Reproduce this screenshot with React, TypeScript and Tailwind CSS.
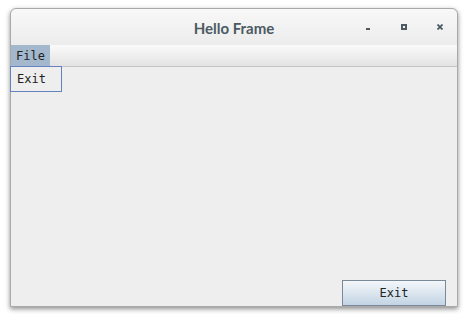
import React from 'react';

const mono = { fontFamily: '"DejaVu Sans Mono", monospace' };

const App: React.FC = () => {
  return (
    <div className="w-[468px] h-[317px] bg-white pt-[8px] pl-[10px]">
      <div className="relative w-[448px] h-[299px] flex flex-col rounded-t-[6px] border border-[#a9a9a9] bg-[#eeeeee] shadow-[0_2px_5px_rgba(0,0,0,0.45)]">
        {/* title bar */}
        <div className="h-[36px] flex items-center pt-[2px] rounded-t-[6px] bg-gradient-to-b from-[#f8f8f8] to-[#ececec]">
          <span
            className="flex-1 text-center text-[15px] font-bold text-[#4b5a63]"
            style={{ fontFamily: 'Lato, "Noto Sans", sans-serif' }}
          >
            Hello Frame
          </span>
          <div className="absolute right-[14px] top-[15px] h-[6px] flex">
            <div className="self-end w-[4px] h-[2px] bg-[#4b5a63] mr-[31px]" />
            <div className="w-[6px] h-[6px] border-[2px] border-[#4b5a63] mr-[30px]" />
            <svg width="6" height="6" viewBox="0 0 6 6">
              <path d="M0.5 0.5L5.5 5.5M5.5 0.5L0.5 5.5" stroke="#4b5a63" strokeWidth="1.8" />
            </svg>
          </div>
        </div>
        {/* menu bar */}
        <div className="h-[22px] flex bg-gradient-to-b from-[#fafafa] to-[#e3e3e3] border-b border-[#c4c4c4]">
          <div
            className="h-[21px] w-[39px] flex items-center justify-center bg-[#a3b8cc] text-[12px] text-[#222222]"
            style={mono}
          >
            File
          </div>
        </div>
        {/* content */}
        <div className="relative flex-1 flex flex-col justify-end items-end pr-[11px]">
          <div
            className="absolute left-[-1px] top-[-1px] w-[52px] h-[26px] border border-[#6382bf] bg-[#eeeeee] flex items-center pl-[6px] text-[12px] text-[#222222]"
            style={mono}
          >
            Exit
          </div>
          <button
            className="w-[104px] h-[26px] border border-[#7a8a99] bg-gradient-to-b from-[#f4f7fa] to-[#c3d4e4] text-[12px] text-[#222222]"
            style={mono}
          >
            Exit
          </button>
        </div>
      </div>
    </div>
  );
};

export default App;
